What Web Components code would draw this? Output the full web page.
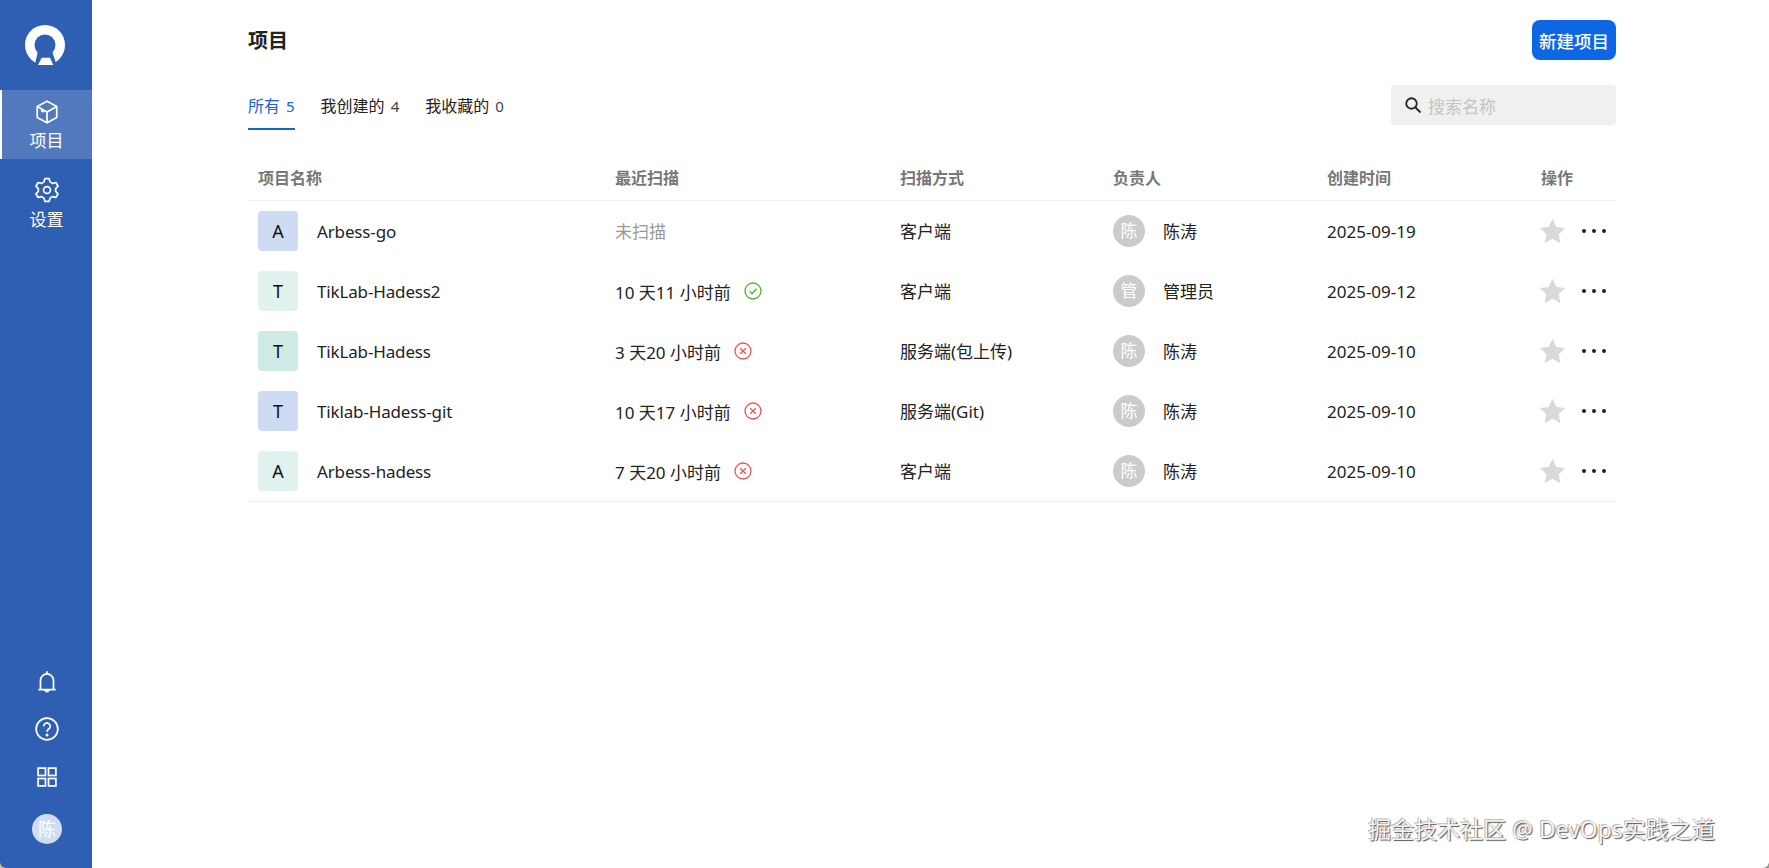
<!DOCTYPE html>
<html lang="zh">
<head>
<meta charset="utf-8">
<title>项目</title>
<style>
    html, body { margin: 0; height: 100%; background: #fff; }
    body { font-family: "Noto Sans", "Noto Sans CJK SC", sans-serif; overflow: hidden; }
</style>
</head>
<body>
<app-shell>
    <side-bar slot="side"></side-bar>
    <page-header></page-header>
    <filter-bar></filter-bar>
    <project-table></project-table>
</app-shell>

<script>
// Shared column widths for the table header and rows
const COLUMNS = '357px 285px 213px 214px 214px 85px';

const ICONS = {
    box: '<path d="M12 2 21 7v10l-9 5-9-5V7z"/><path d="M3 7l9 5 9-5M12 12v10M6.5 10.5l2.5 1.4"/>',
    gear: '<circle cx="12" cy="12" r="3.2"/><path d="M10 1.5h4l.8 3 2.4 1.4 3-.8 2 3.4-2.2 2.2v2.6l2.2 2.2-2 3.4-3-.8-2.4 1.4-.8 3h-4l-.8-3-2.4-1.4-3 .8-2-3.4 2.2-2.2v-2.6L1.8 8.5l2-3.4 3 .8 2.4-1.4z"/>',
    bell: '<path d="M12 2v2.5M6 19V10.5a6 6 0 0 1 12 0V19M4 19h16M10.2 19a1.8 1.8 0 0 0 3.6 0"/>',
    help: '<circle cx="12" cy="12" r="10"/><path d="M9 9.5a3 3 0 1 1 4.6 2.5c-1 .7-1.6 1.3-1.6 2.5"/><circle cx="12" cy="17.5" r=".6"/>',
    apps: '<rect x="3.8" y="3.8" width="6.8" height="6.8"/><rect x="13.4" y="3.8" width="6.8" height="6.8"/><rect x="3.8" y="13.4" width="6.8" height="6.8"/><rect x="13.4" y="13.4" width="6.8" height="6.8"/>'
};

class AppShell extends HTMLElement {
    constructor() {
        super();
        this.attachShadow({ mode: 'open' });
        this.shadowRoot.innerHTML = `
            <style>
                :host { display: flex; height: 100vh; position: relative; color: #222; }
                main { flex: 1; padding: 20px 153px 0 156px; min-width: 0; }
                .mark {
                    position: absolute; right: 54px; bottom: 23px;
                    font: 23px "Noto Sans", "Noto Sans CJK SC", sans-serif;
                    color: #f4f4f4;
                    text-shadow: 1px 1px 1px #555, -1px -1px 0 #bbb;
                }
                .corner { position: absolute; bottom: 0; width: 6px; height: 6px; }
                .corner.left { left: 0; background: radial-gradient(circle at top right, transparent 5.5px, #b9b8a8 6px); }
                .corner.right { right: 0; background: radial-gradient(circle at top left, transparent 5.5px, #9a9a92 6px); }
            </style>
            <slot name="side"></slot>
            <main><slot></slot></main>
            <div class="mark">掘金技术社区 @ DevOps实践之道</div>
            <div class="corner left"></div>
            <div class="corner right"></div>
        `;
    }
}

class NavItem extends HTMLElement {
    constructor() {
        super();
        this.attachShadow({ mode: 'open' });
    }

    connectedCallback() {
        this.shadowRoot.innerHTML = `
            <style>
                :host {
                    display: flex; flex-direction: column; align-items: center;
                    height: 69px; padding: 9px 0 0 1px; box-sizing: border-box;
                    color: #fff; font-size: 17px; line-height: 26px; gap: 3px;
                }
                :host([active]) { background: #5279bd; box-shadow: inset 2px 0 0 #fff; }
                :host([icon="gear"]) { gap: 4px; }
                svg { width: 26px; height: 26px; fill: none; stroke: #fff; stroke-width: 1.6; stroke-linejoin: round; }
            </style>
            <svg viewBox="0 0 24 24">${ICONS[this.getAttribute('icon')]}</svg>
            <slot></slot>
        `;
    }
}

class SideBar extends HTMLElement {
    constructor() {
        super();
        this.attachShadow({ mode: 'open' });
        this.shadowRoot.innerHTML = `
            <style>
                :host {
                    display: flex; flex-direction: column; width: 92px; height: 100%;
                    background: #2e5fb3; flex: none; font-family: inherit;
                }
                .logo { height: 90px; display: flex; align-items: center; justify-content: center; padding-right: 2px; }
                .nav { display: flex; flex-direction: column; gap: 9px; }
                .tools {
                    margin-top: auto; padding: 0 0 24px 2px;
                    display: flex; flex-direction: column; align-items: center; gap: 21.5px;
                }
                .tools svg { display: block; width: 26px; height: 26px; fill: none; stroke: #fff; stroke-width: 1.6; }
                .me {
                    width: 30px; height: 30px; border-radius: 50%; background: #cfdcf2; margin-top: 3px;
                    color: #fff; font-size: 18px; line-height: 30px; text-align: center;
                }
            </style>
            <div class="logo">
                <svg width="40" height="40" viewBox="0 0 40 40">
                    <circle cx="20" cy="20" r="20" fill="#fff"/>
                    <circle cx="20" cy="20" r="10.5" fill="#2e5fb3"/>
                    <path d="M9.5 41 13 26H27L32 41Z" fill="#2e5fb3"/>
                    <path d="M16.7 32.7H25L28.5 40.5H12.7Z" fill="#fff"/>
                </svg>
            </div>
            <div class="nav">
                <nav-item icon="box" active>项目</nav-item>
                <nav-item icon="gear">设置</nav-item>
            </div>
            <div class="tools">
                <svg viewBox="0 0 24 24">${ICONS.bell}</svg>
                <svg viewBox="0 0 24 24">${ICONS.help}</svg>
                <svg viewBox="0 0 24 24">${ICONS.apps}</svg>
                <div class="me">陈</div>
            </div>
        `;
    }
}

class PageHeader extends HTMLElement {
    constructor() {
        super();
        this.attachShadow({ mode: 'open' });
        this.shadowRoot.innerHTML = `
            <style>
                :host { display: flex; justify-content: space-between; align-items: center; height: 40px; }
                h1 { margin: 0 0 1px; font-size: 20px; font-weight: 700; color: #222; }
                button {
                    height: 40px; width: 84px; padding: 0; border: 0; border-radius: 8px;
                    background: #0d66e4; color: #fff; font: 500 17.5px "Noto Sans", "Noto Sans CJK SC", sans-serif;
                }
            </style>
            <h1>项目</h1>
            <button>新建项目</button>
        `;
    }
}

class FilterBar extends HTMLElement {
    constructor() {
        super();
        this.attachShadow({ mode: 'open' });
        this.shadowRoot.innerHTML = `
            <style>
                :host { display: flex; justify-content: space-between; margin-top: 25px; height: 45px; }
                .tabs { display: flex; gap: 26px; font-size: 16px; color: #222; }
                .tab { height: 45px; line-height: 42px; box-sizing: border-box; }
                .tab b { font-weight: 400; font-size: 15px; margin-left: 6px; color: #444; }
                .tab.on { color: #1565d0; border-bottom: 2px solid #1565d0; }
                .tab.on b { color: #1565d0; }
                .search {
                    width: 225px; height: 40px; box-sizing: border-box; background: #f0f0f0; border-radius: 4px;
                    display: flex; align-items: center; gap: 6px; padding-left: 13px;
                    color: #c4c4c4; font-size: 17px;
                }
                svg { width: 18px; height: 18px; fill: none; stroke: #222; stroke-width: 2.4; }
            </style>
            <div class="tabs">
                <div class="tab on">所有<b>5</b></div>
                <div class="tab">我创建的<b>4</b></div>
                <div class="tab">我收藏的<b>0</b></div>
            </div>
            <div class="search">
                <svg viewBox="0 0 24 24"><circle cx="10" cy="10" r="7"/><path d="M15 15l7 7"/></svg>
                <span>搜索名称</span>
            </div>
        `;
    }
}

class StatusIcon extends HTMLElement {
    constructor() {
        super();
        this.attachShadow({ mode: 'open' });
    }

    connectedCallback() {
        const ok = this.getAttribute('type') === 'ok';
        this.shadowRoot.innerHTML = `
            <style>
                :host { display: inline-flex; margin-left: 13px; }
                svg { width: 18px; height: 18px; fill: none; stroke-width: 1.3; stroke: ${ok ? '#52b02f' : '#e8545c'}; }
            </style>
            <svg viewBox="0 0 18 18">
                <circle cx="9" cy="9" r="8"/>
                <path d="${ok ? 'M5.5 9.3l2.5 2.5 4.5-5' : 'M6.2 6.2l5.6 5.6M11.8 6.2l-5.6 5.6'}"/>
            </svg>
        `;
    }
}

class ProjectRow extends HTMLElement {
    constructor() {
        super();
        this.attachShadow({ mode: 'open' });
    }

    connectedCallback() {
        const d = this.dataset;
        let scan = `<span class="none up">未扫描</span>`;
        if (d.scan) {
            scan = `${d.scan}<status-icon type="${d.status}"></status-icon>`;
        }
        this.shadowRoot.innerHTML = `
            <style>
                :host {
                    display: grid; grid-template-columns: ${COLUMNS}; height: 60px; align-items: center;
                    font-size: 17px; color: #222;
                }
                .cell { padding-left: 10px; display: flex; align-items: center; white-space: nowrap; }
                .up { padding-bottom: 2px; }
                .name { letter-spacing: -0.15px; }
                .mark {
                    width: 40px; height: 40px; border-radius: 4px; margin-right: 19px; letter-spacing: 0;
                    display: flex; align-items: center; justify-content: center; font-size: 18px; color: #111;
                }
                .none { color: #999; }
                .face {
                    width: 32px; height: 32px; border-radius: 50%; background: #cbcbcb; color: #fff;
                    text-align: center; line-height: 32px; margin-right: 18px; font-size: 17px;
                }
                .star { width: 29px; height: 29px; fill: #d9d9d9; margin-left: -3px; }
                .more { display: flex; gap: 6px; margin-left: 15px; }
                .more i { width: 4px; height: 4px; background: #222; border-radius: 50%; }
            </style>
            <div class="cell name"><span class="mark" style="background:${d.color}">${d.letter}</span>${d.name}</div>
            <div class="cell">${scan}</div>
            <div class="cell"><span class="up">${d.way}</span></div>
            <div class="cell"><span class="face">${d.owner[0] === '陈' ? '陈' : '管'}</span><span class="up">${d.owner}</span></div>
            <div class="cell">${d.date}</div>
            <div class="cell">
                <svg class="star" viewBox="0 0 24 24"><path d="M12 1.5l3.2 6.8 7.3.9-5.4 5.1 1.5 7.4-6.6-3.7-6.6 3.7 1.5-7.4-5.4-5.1 7.3-.9z"/></svg>
                <span class="more"><i></i><i></i><i></i></span>
            </div>
        `;
    }
}

class ProjectTable extends HTMLElement {
    constructor() {
        super();
        this.attachShadow({ mode: 'open' });
    }

    connectedCallback() {
        const rows = [
            { letter: 'A', color: '#cddcf3', name: 'Arbess-go', way: '客户端', owner: '陈涛', date: '2025-09-19' },
            { letter: 'T', color: '#e2f2ef', name: 'TikLab-Hadess2', scan: '10 天11 小时前', status: 'ok', way: '客户端', owner: '管理员', date: '2025-09-12' },
            { letter: 'T', color: '#cfe9e5', name: 'TikLab-Hadess', scan: '3 天20 小时前', status: 'err', way: '服务端(包上传)', owner: '陈涛', date: '2025-09-10' },
            { letter: 'T', color: '#cddcf3', name: 'Tiklab-Hadess-git', scan: '10 天17 小时前', status: 'err', way: '服务端(Git)', owner: '陈涛', date: '2025-09-10' },
            { letter: 'A', color: '#e0f2ef', name: 'Arbess-hadess', scan: '7 天20 小时前', status: 'err', way: '客户端', owner: '陈涛', date: '2025-09-10' }
        ];

        const attr = v => (v === undefined ? '' : v);
        this.shadowRoot.innerHTML = `
            <style>
                :host { display: block; margin-top: 25px; }
                .head {
                    display: grid; grid-template-columns: ${COLUMNS}; height: 46px; align-items: center;
                    font-size: 16px; font-weight: 700; color: #777; border-bottom: 1px solid #eee;
                    box-sizing: border-box;
                }
                .head div { padding: 0 0 2px 10px; }
                .body { border-bottom: 1px solid #eee; }
            </style>
            <div class="head">
                <div>项目名称</div><div>最近扫描</div><div>扫描方式</div>
                <div>负责人</div><div>创建时间</div><div>操作</div>
            </div>
            <div class="body">
                ${rows.map(r => `
                    <project-row data-letter="${r.letter}" data-color="${r.color}" data-name="${r.name}"
                        data-scan="${attr(r.scan)}" data-status="${attr(r.status)}" data-way="${r.way}"
                        data-owner="${r.owner}" data-date="${r.date}"></project-row>`).join('')}
            </div>
        `;
    }
}

customElements.define('nav-item', NavItem);
customElements.define('side-bar', SideBar);
customElements.define('app-shell', AppShell);
customElements.define('page-header', PageHeader);
customElements.define('filter-bar', FilterBar);
customElements.define('status-icon', StatusIcon);
customElements.define('project-row', ProjectRow);
customElements.define('project-table', ProjectTable);
</script>
</body>
</html>
